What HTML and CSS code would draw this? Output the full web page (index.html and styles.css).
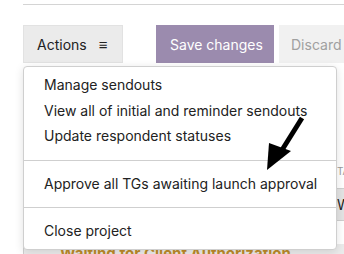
FILE: index.html
```html
<!DOCTYPE html>
<html lang="en">
<head>
  <meta charset="UTF-8" />
  <title>Project actions</title>
  <link rel="stylesheet" href="styles.css">
</head>
<body>

<div class="page">
  <div class="top-rule"></div>

  <div class="toolbar">
    <button class="btn btn-actions">Actions <span class="burger">&#8801;</span></button>
    <button class="btn btn-save">Save changes</button>
    <button class="btn btn-discard">Discard</button>
  </div>

  <!-- content behind the open menu -->
  <div class="content">
    <div class="left-col">
      <div class="left-mark"></div>
    </div>
    <div class="right-col">
      <div class="col-label">TA</div>
      <div class="col-select">Waiting</div>
    </div>
  </div>
  <div class="status-band">
    <span class="status-text">Waiting for Client Authorization</span>
  </div>

  <div class="menu">
    <a class="menu-item">Manage sendouts</a>
    <a class="menu-item">View all of initial and reminder sendouts</a>
    <a class="menu-item">Update respondent statuses</a>
    <div class="menu-divider"></div>
    <a class="menu-item">Approve all TGs awaiting launch approval</a>
    <div class="menu-divider"></div>
    <a class="menu-item">Close project</a>
  </div>

  <svg class="arrow" width="60" height="70" viewBox="0 0 60 70">
    <line x1="47" y1="3" x2="27" y2="35" stroke="#000" stroke-width="5" />
    <polygon points="14,28 36,36 12,55" fill="#000" />
  </svg>
</div>

</body>
</html>
```

FILE: styles.css
```css
* {
  box-sizing: border-box;
}

body {
  margin: 0;
  background: #fff;
  font-family: Inter, "Noto Sans", sans-serif;
  overflow: hidden;
}

.page {
  position: relative;
  width: 344px;
  height: 254px;
  overflow: hidden;
}

.top-rule {
  margin: 4px 0 0 23px;
  border-top: 1px solid #d4d4d4;
}

.toolbar {
  display: flex;
  align-items: center;
  margin-top: 20px;
  padding-left: 23px;
}

.btn {
  flex-shrink: 0;
  height: 38px;
  margin: 0;
  border: none;
  font-family: inherit;
  font-size: 14px;
  padding: 0 14px;
  white-space: nowrap;
}

.btn-actions {
  width: 100px;
  background: #ebebeb;
  color: #222;
  text-align: left;
  box-shadow: inset 0 0 0 1px #e2e2e2;
}

.burger {
  margin-left: 8px;
  font-size: 15px;
}

.btn-save {
  margin-left: 33px;
  width: 118px;
  background: #9b8bae;
  color: #fff;
}

.btn-discard {
  margin-left: 5px;
  padding-left: 12px;
  background: #f1f1f1;
  color: #a0a0a0;
}

.content {
  display: flex;
  height: 187px;
}

.left-col {
  flex-shrink: 0;
  width: 336px;
  padding-left: 23px;
}

.left-mark {
  margin-top: 85px;
  width: 2px;
  height: 9px;
  background: #333;
}

.right-col {
  flex: 1;
  min-width: 0;
  padding-top: 102px;
  overflow: hidden;
}

.col-label {
  font-size: 10px;
  color: #9a9a9a;
  padding-left: 1px;
}

.col-select {
  margin-top: 11px;
  height: 33px;
  line-height: 31px;
  background: #e3e3e3;
  border-top: 1px solid #cfcfcf;
  border-bottom: 1px solid #cfcfcf;
  font-size: 14px;
  color: #222;
  padding-left: 1px;
  white-space: nowrap;
}

.status-band {
  margin: 0 0 0 23px;
  height: 10px;
  background: #ebebeb;
  border-left: 1px solid #cfcfcf;
  padding-left: 36px;
}

.status-text {
  display: block;
  margin-top: -6px;
  font-size: 15px;
  font-weight: 700;
  color: #be8a2a;
  white-space: nowrap;
}

.menu {
  position: absolute;
  top: 66px;
  left: 23px;
  width: 314px;
  padding: 5px 0;
  background: #fff;
  border: 1px solid #cfcfcf;
  border-radius: 4px;
  box-shadow: 0 2px 10px rgba(0,0,0,0.12);
}

.menu-item {
  display: block;
  padding-left: 20px;
  line-height: 25.5px;
  font-size: 14px;
  color: #222;
  white-space: nowrap;
}

.menu-divider {
  margin: 11px 0 10px;
  border-top: 1px solid #cfcfcf;
}

.arrow {
  position: absolute;
  left: 255px;
  top: 115px;
}
```
